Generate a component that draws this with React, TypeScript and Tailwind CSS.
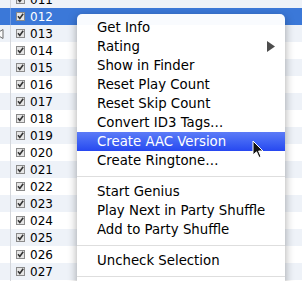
import React from "react";

const rows = [
  "011", "012", "013", "014", "015", "016", "017", "018", "019",
  "020", "021", "022", "023", "024", "025", "026", "027", "028",
];

type Item = { label?: string; sep?: boolean; sub?: boolean; active?: boolean };

const items: Item[] = [
  { label: "Get Info" },
  { label: "Rating", sub: true },
  { label: "Show in Finder" },
  { label: "Reset Play Count" },
  { label: "Reset Skip Count" },
  { label: "Convert ID3 Tags…" },
  { label: "Create AAC Version", active: true },
  { label: "Create Ringtone…" },
  { sep: true },
  { label: "Start Genius" },
  { label: "Play Next in Party Shuffle" },
  { label: "Add to Party Shuffle" },
  { sep: true },
  { label: "Uncheck Selection" },
  { sep: true },
];

function CheckBox() {
  return (
    <svg width="9" height="9" viewBox="0 0 9 9" className="shrink-0">
      <rect x="0.5" y="0.5" width="8" height="8" fill="#e6e6e6" stroke="#8a8a8a" />
      <path d="M2 4.3 L3.8 6.4 L7.2 1.8" fill="none" stroke="#333" strokeWidth="1.6" />
    </svg>
  );
}

function Speaker() {
  return (
    <svg width="10" height="10" viewBox="0 0 10 10" className="-ml-[6px]">
      <path d="M1 3.5 H4 L9 0.5 V9.5 L4 6.5 H1 Z" fill="#fafafa" stroke="#6b6b6b" strokeWidth="1" />
    </svg>
  );
}

function Row({ n, i }: { n: string; i: number }) {
  const selected = n === "012";
  const bg = selected ? "bg-[#3b78d8]" : i % 2 === 0 ? "bg-[#eef2f8]" : "bg-white";
  return (
    <div className={`flex h-[17px] items-center ${bg}`}>
      <div
        className={`flex h-full w-[11px] items-center overflow-hidden border-r ${
          selected ? "border-[#6f9be2]" : "border-[#d4d7dc]"
        }`}
      >
        {n === "013" && <Speaker />}
      </div>
      <div className="ml-[5px]">
        <CheckBox />
      </div>
      <span
        className={`ml-[5px] text-[12px] leading-none ${selected ? "text-white" : "text-black"}`}
      >
        {n}
      </span>
    </div>
  );
}

export default function App() {
  return (
    <div
      className="relative h-[281px] w-[302px] overflow-hidden bg-white"
      style={{ fontFamily: '"DejaVu Sans", "Liberation Sans", sans-serif' }}
    >
      {/* track list behind the menu */}
      <div className="-mt-[9px] flex flex-col">
        {rows.map((n, i) => (
          <Row key={n} n={n} i={i} />
        ))}
      </div>

      {/* context menu */}
      <div className="absolute left-[77px] top-[14px] w-[208px] rounded-[5px] bg-white/[0.97] pt-[4px] pb-[6px] shadow-[0_3px_10px_rgba(0,0,0,0.35)]">
        {items.map((it, idx) =>
          it.sep ? (
            <div key={idx} className="flex h-[12px] items-center">
              <div className="h-px w-full bg-[#dedede]" />
            </div>
          ) : (
            <div
              key={idx}
              className={`flex h-[19px] items-center justify-between pl-[20px] pr-[10px] text-[13.3px] ${
                it.active
                  ? "bg-gradient-to-b from-[#5c7bf7] to-[#2747f0] text-white"
                  : "text-black"
              }`}
            >
              <span>{it.label}</span>
              {it.sub && (
                <svg width="8" height="11" viewBox="0 0 8 11">
                  <path d="M0 0 L8 5.5 L0 11 Z" fill="#4d4d4d" />
                </svg>
              )}
            </div>
          )
        )}
      </div>

      {/* mouse pointer */}
      <svg
        className="absolute left-[252px] top-[140px]"
        width="12"
        height="19"
        viewBox="0 0 12 19"
      >
        <path
          d="M1 1 L1 15 L4.5 11.8 L7 17.5 L9 16.6 L6.6 11 L11 11 Z"
          fill="#111"
          stroke="#fff"
          strokeWidth="1"
          strokeLinejoin="round"
        />
      </svg>
    </div>
  );
}
